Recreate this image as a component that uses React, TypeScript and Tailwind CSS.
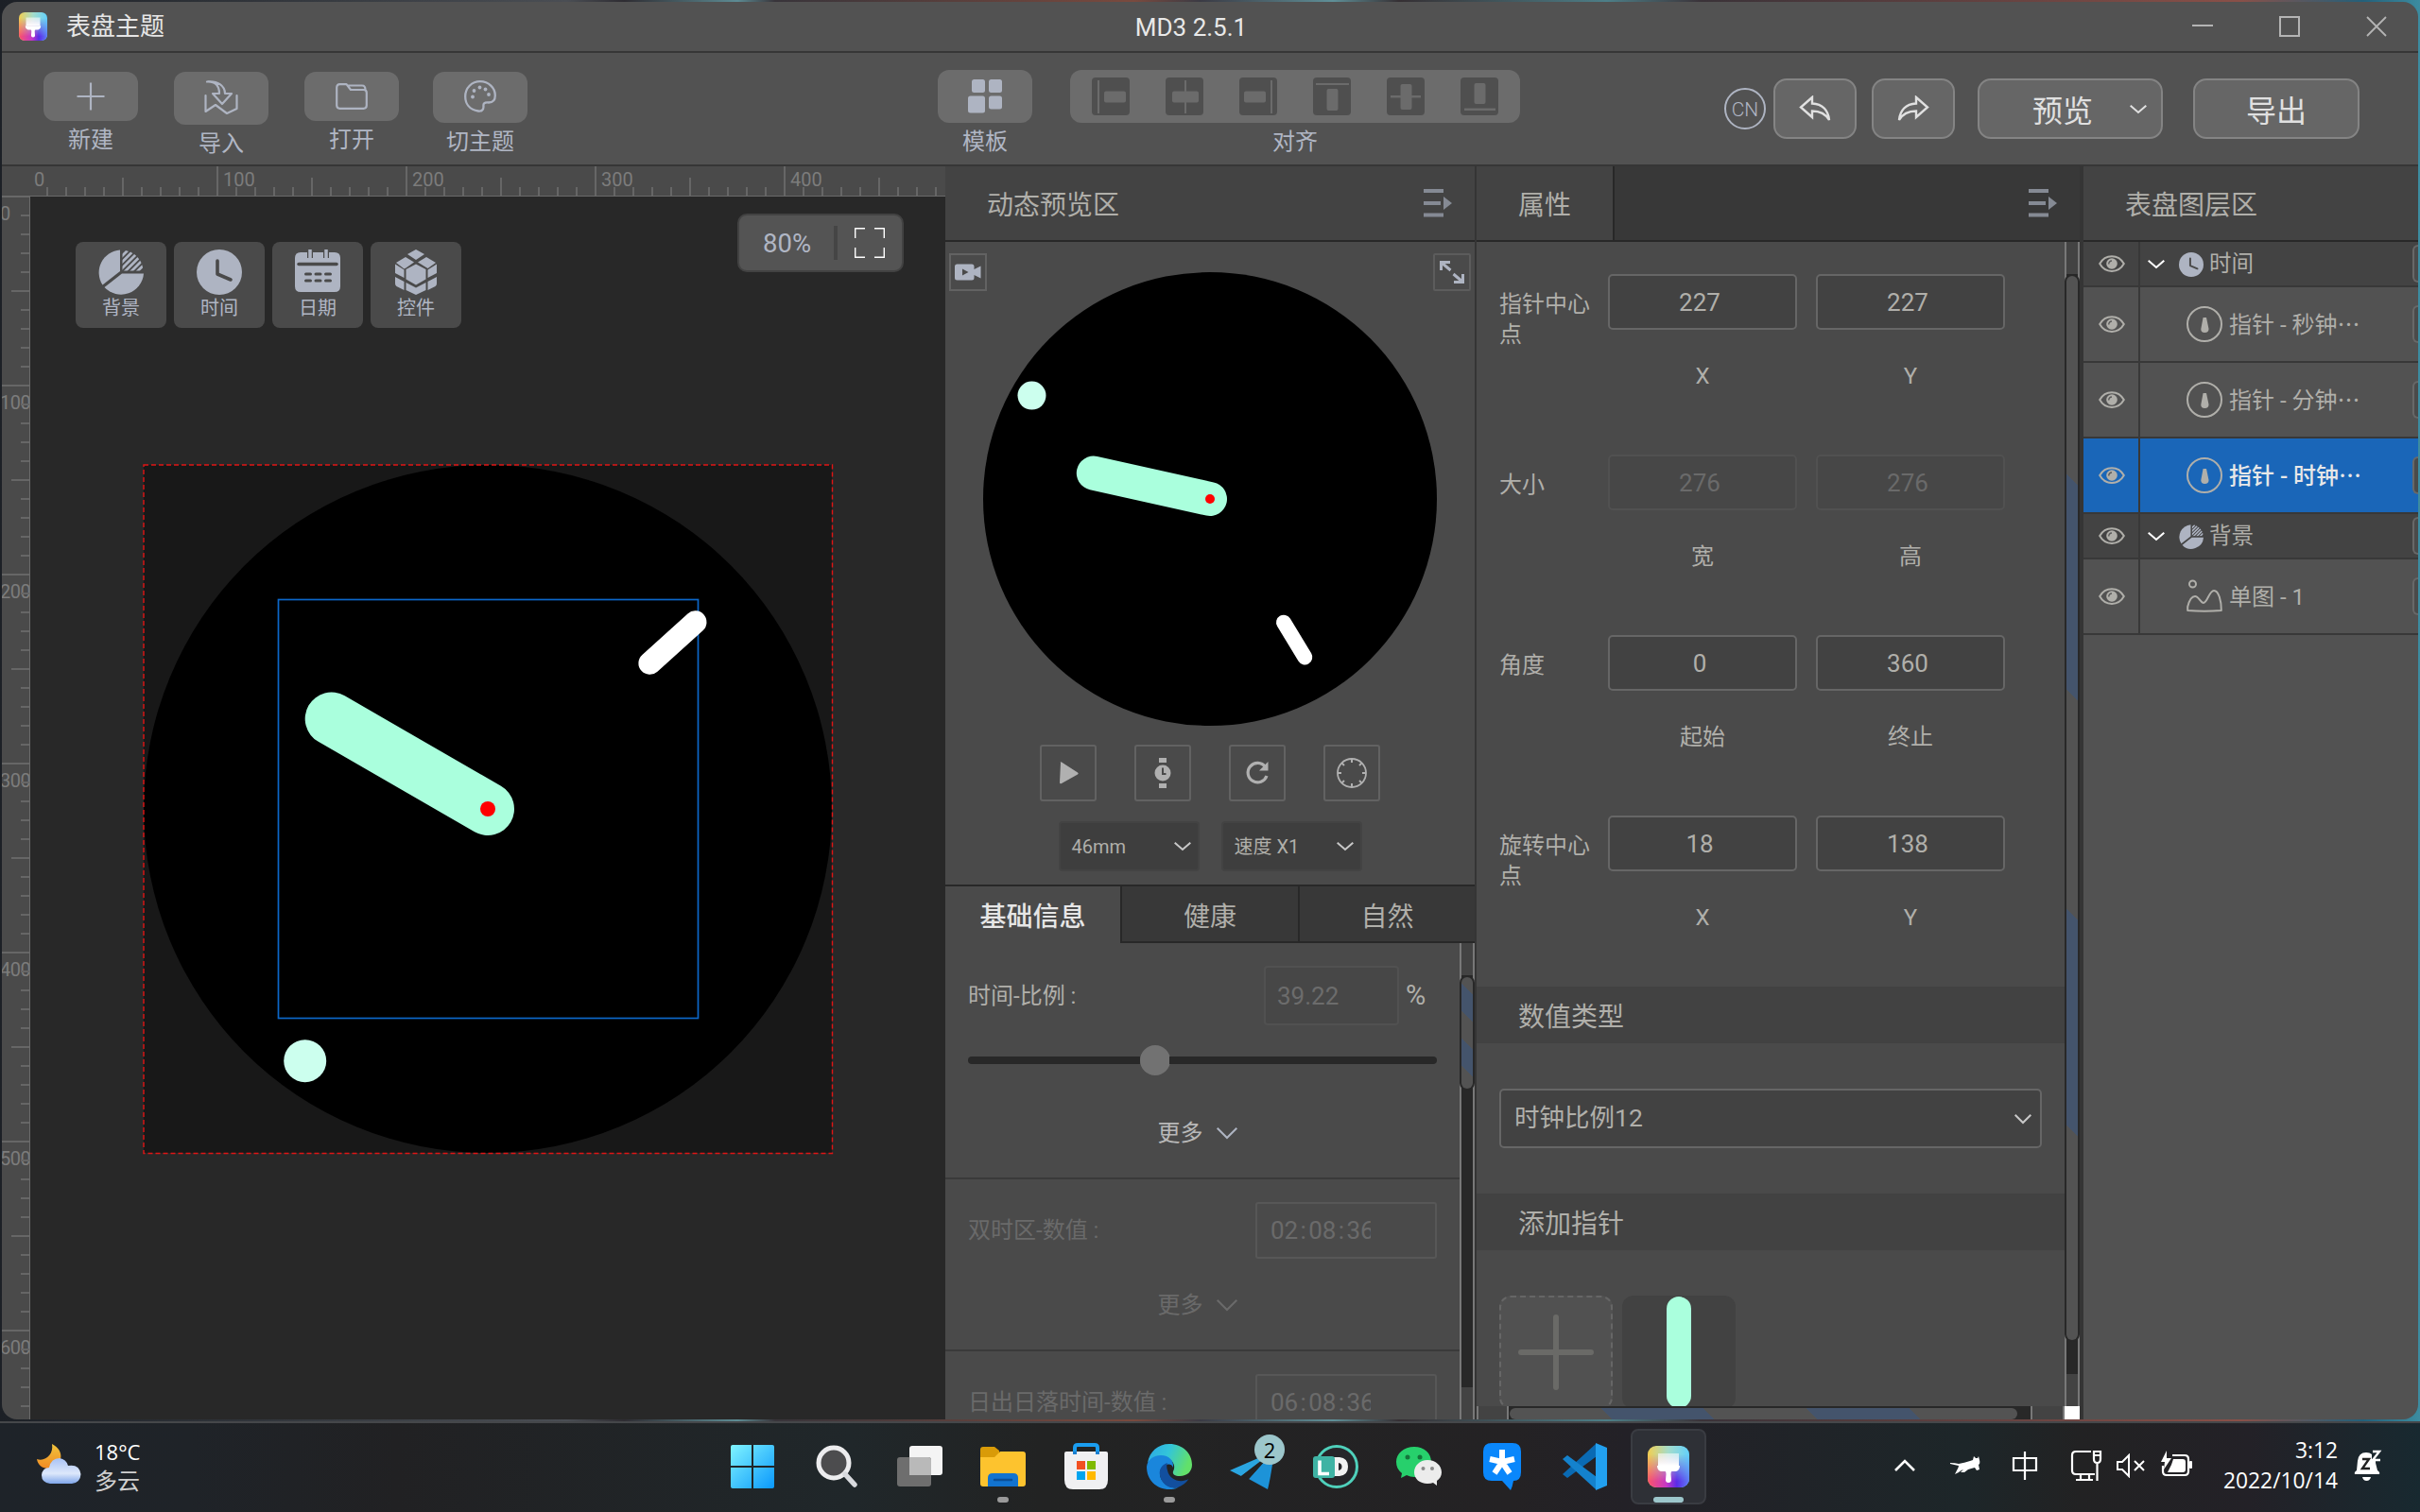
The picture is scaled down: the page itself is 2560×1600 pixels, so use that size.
import React from "react";

type Kids = { children?: React.ReactNode };

const ink = "#aeb4c2";

function Svg({ w, h, vb, className, children }: { w: number; h: number; vb?: string; className?: string } & Kids) {
  return (
    <svg width={w} height={h} viewBox={vb ?? `0 0 ${w} ${h}`} fill="none" className={"shrink-0 " + (className ?? "")}>
      {children}
    </svg>
  );
}

function Chevron({ w = 18, h = 9, color = "#c8c8c8", sw = 2 }: { w?: number; h?: number; color?: string; sw?: number }) {
  return (
    <Svg w={w} h={h} className="overflow-visible">
      <path d={`M0.7 0.7 L${w / 2} ${h - 1} L${w - 0.7} 0.7`} stroke={color} strokeWidth={sw} />
    </Svg>
  );
}

function AppIcon({ size, id }: { size: number; id: string }) {
  return (
    <Svg w={size} h={size} vb="0 0 44 44">
      <defs>
        <linearGradient id={id + "a"} x1="0" y1="0" x2="1" y2="0">
          <stop offset="0" stopColor="#f2cf50" />
          <stop offset=".5" stopColor="#a4dccb" />
          <stop offset="1" stopColor="#62d0fb" />
        </linearGradient>
        <linearGradient id={id + "b"} x1="0" y1="0" x2="1" y2="0">
          <stop offset="0" stopColor="#fb5468" />
          <stop offset=".45" stopColor="#c637c6" />
          <stop offset=".7" stopColor="#5a2be8" />
          <stop offset="1" stopColor="#5f7cf5" />
        </linearGradient>
        <linearGradient id={id + "c"} x1="0" y1="0" x2="0" y2="1">
          <stop offset=".2" stopColor="#fff" stopOpacity="0" />
          <stop offset=".85" stopColor="#fff" />
        </linearGradient>
        <mask id={id + "m"}>
          <rect width="44" height="44" fill={`url(#${id}c)`} />
        </mask>
        <linearGradient id={id + "d"} x1="0" y1="0" x2="0" y2="1">
          <stop offset="0" stopColor="#fff" stopOpacity=".55" />
          <stop offset="1" stopColor="#fff" />
        </linearGradient>
      </defs>
      <rect width="44" height="44" rx="9" fill={`url(#${id}a)`} />
      <rect width="44" height="44" rx="9" fill={`url(#${id}b)`} mask={`url(#${id}m)`} />
      <path d="M11 8h22v13H11z" fill={`url(#${id}d)`} />
      <path d="M10 21h24q0 5-4 6h-4.500q-1 0-1 3l.5 6q0 3-3 3t-3-3l.5-6q0-3-1-3H14q-4-1-4-6z" fill="#fff" />
    </Svg>
  );
}

function PieIcon({ size }: { size: number }) {
  return (
    <Svg w={size} h={size} vb="0 0 48 48">
      <defs>
        <clipPath id={"pq" + size}>
          <path d="M25.500 0.500A23.500 23.500 0 0 1 47.500 22.500H25.500z" />
        </clipPath>
      </defs>
      <path d="M23 0.500V23L4.500 37.500A24 24 0 0 1 23 .5z" fill={ink} />
      <path d="M25 25.500H48A24 24 0 0 1 6.500 40z" fill={ink} />
      <g clipPath={`url(#pq${size})`} stroke={ink} strokeWidth="2.800">
        <path d="M20 12 40 -8M20 18.500 46 -7.500M20 25 52 -7M22 29.500 54 -2.500M28 30 54 4M34.500 30 56 8.500" />
      </g>
    </Svg>
  );
}

function ClockIcon({ size, hand = "#4a4a4a" }: { size: number; hand?: string }) {
  return (
    <Svg w={size} h={size} vb="0 0 48 48">
      <circle cx="24" cy="24" r="24" fill={ink} />
      <path d="M22 12V26L36 32" stroke={hand} strokeWidth="3.600" strokeLinecap="round" strokeLinejoin="round" />
    </Svg>
  );
}

function TopBar() {
  return (
    <div className="flex h-[52px] shrink-0 items-center bg-[#525252]">
      <div className="flex w-[1160px] items-center pl-[18px]">
        <AppIcon size={30} id="t" />
        <span className="ml-5 text-[26px] leading-none text-[#e6e6e6]">表盘主题</span>
      </div>
      <div className="flex w-[194px] justify-center pt-[2px] pl-[2px] text-[26px] leading-none text-[#e8e8e8]">
        MD3 2.5.1
      </div>
      <div className="flex flex-1 items-center justify-end gap-[70px] pr-[33px]">
        <Svg w={22} h={22}>
          <path d="M0 10H22" stroke="#b4b4b4" strokeWidth="2" />
        </Svg>
        <Svg w={22} h={22}>
          <rect x="1" y="1" width="20" height="20" stroke="#b4b4b4" strokeWidth="2" />
        </Svg>
        <Svg w={22} h={22}>
          <path d="M1 1 21 21M21 1 1 21" stroke="#b4b4b4" strokeWidth="1.800" />
        </Svg>
      </div>
    </div>
  );
}

function ToolButton({ box, label, gap, children }: { box: string; label: string; gap: string } & Kids) {
  return (
    <div className={"flex w-[100px] shrink-0 flex-col items-center " + gap}>
      <div className={"flex w-[100px] items-center justify-center rounded-xl bg-[#6c6c6c] " + box}>{children}</div>
      <span className="mt-[8px] text-2xl leading-6 whitespace-nowrap text-[#b0b6c4]">{label}</span>
    </div>
  );
}

function AlignIcon({ children }: Kids) {
  return (
    <Svg w={40} h={40}>
      <rect width="40" height="40" rx="4" fill="#4f4f4f" />
      <g fill="#6b6b6b">{children}</g>
    </Svg>
  );
}

function BigButton({ className, children }: { className: string } & Kids) {
  return (
    <div
      className={
        "flex h-16 shrink-0 items-center rounded-[14px] border-2 border-[#848484] bg-[#666666] text-[32px] leading-none text-[#e0e0e0] " +
        className
      }
    >
      {children}
    </div>
  );
}

function Toolbar() {
  return (
    <div className="flex h-[122px] shrink-0 items-start border-y-2 border-[#363636] bg-[#525252]">
      <div className="flex w-[990px] shrink-0 items-start gap-[38px] pt-5 pl-11">
        <ToolButton box="h-[52px]" label="新建" gap="">
          <Svg w={30} h={30}>
            <path d="M15 0.500V29.500M.5 15H29.500" stroke={ink} strokeWidth="2.200" />
          </Svg>
        </ToolButton>
        <ToolButton box="h-14" label="导入" gap="">
          <Svg w={36} h={36} className="mt-[-2px]">
            <path
              d="M3 1.500C12 1 16 6 16 14H9L19 25 29 14H22C22 6 14 0 3 1.500zM1.500 16V33L12 26 24 35 34.500 30V16"
              stroke={ink}
              strokeWidth="2.200"
              strokeLinejoin="round"
              strokeLinecap="round"
            />
          </Svg>
        </ToolButton>
        <ToolButton box="h-[52px]" label="打开" gap="">
          <Svg w={34} h={28}>
            <path
              d="M4.500 1.200H11.500L16 7H29.500Q32.800 7 32.800 10V23.500Q32.800 26.800 29.500 26.800H4.500Q1.200 26.800 1.200 23.500V4.500Q1.200 1.200 4.500 1.200zM12 2.500H28Q31.500 2.500 31.500 7"
              stroke={ink}
              strokeWidth="2.200"
              strokeLinejoin="round"
            />
          </Svg>
        </ToolButton>
        <ToolButton box="h-[54px]" label="切主题" gap="ml-[-2px]">
          <Svg w={34} h={34} className="mt-[-2px]">
            <path
              d="M15 32.500C5 31 1.200 24 1.200 17C1.200 8 8 1.200 17 1.200S32.800 8 32.800 16C32.800 21 30 23.500 26 23.500C21 23 20 25 20.500 28C20.500 31.500 18 33 15 32.500z"
              stroke={ink}
              strokeWidth="2.300"
            />
            <g fill={ink}>
              <circle cx="9" cy="17.500" r="1.900" />
              <circle cx="10.500" cy="11" r="1.900" />
              <circle cx="16.500" cy="7.500" r="1.900" />
              <circle cx="22.500" cy="9.500" r="1.900" />
              <circle cx="26" cy="15" r="1.900" />
            </g>
          </Svg>
        </ToolButton>
      </div>
      <div className="flex w-[840px] shrink-0 items-start gap-10 pt-[18px]">
        <ToolButton box="h-14" label="模板" gap="">
          <Svg w={36} h={36}>
            <g fill={ink}>
              <rect x="4" y="0" width="14" height="14" rx="2.500" />
              <rect x="22" y="0" width="14" height="14" rx="2.500" />
              <rect x="0" y="17.500" width="18" height="18" rx="2.500" />
              <rect x="22" y="17.500" width="14" height="14" rx="2.500" />
            </g>
          </Svg>
        </ToolButton>
        <div className="flex w-[476px] flex-col items-center">
          <div className="flex h-14 w-[476px] items-center justify-center gap-[38px] rounded-xl bg-[#6c6c6c]">
            <AlignIcon>
              <rect x="6" y="3" width="2" height="35" />
              <rect x="13" y="14.500" width="23" height="12" rx="2" />
            </AlignIcon>
            <AlignIcon>
              <rect x="20" y="3" width="2" height="35" />
              <rect x="7" y="14.500" width="28" height="12" rx="2" />
            </AlignIcon>
            <AlignIcon>
              <rect x="33" y="3" width="2" height="35" />
              <rect x="5" y="14.500" width="23" height="12" rx="2" />
            </AlignIcon>
            <AlignIcon>
              <rect x="3" y="6" width="35" height="2" />
              <rect x="14.500" y="12" width="12" height="23" rx="2" />
            </AlignIcon>
            <AlignIcon>
              <rect x="4" y="19" width="32" height="2.500" />
              <rect x="14.500" y="7" width="12" height="27" rx="2" />
            </AlignIcon>
            <AlignIcon>
              <rect x="4" y="32.500" width="33" height="2.500" />
              <rect x="14.500" y="6" width="12" height="22" rx="2" />
            </AlignIcon>
          </div>
          <span className="mt-[8px] text-2xl leading-6 text-[#b0b6c4]">对齐</span>
        </div>
      </div>
      <div className="mt-[27px] flex flex-1 items-center">
        <div className="mr-2 ml-[-8px] flex size-11 shrink-0 items-center justify-center rounded-full border-2 border-[#aeb4c2] pt-[2px] text-[21px] leading-none font-light text-[#b0b6c4]">
          CN
        </div>
        <BigButton className="w-[88px] justify-center">
          <Svg w={34} h={28}>
            <path
              d="M14 2 2 12.500 14 23V16.500C22 16.500 28 19 32 26C31 16 25 9 14 8.500z"
              stroke="#e0e0e0"
              strokeWidth="2.400"
              strokeLinejoin="miter"
            />
          </Svg>
        </BigButton>
        <BigButton className="ml-4 w-[88px] justify-center">
          <Svg w={34} h={28}>
            <path
              d="M20 2 32 12.500 20 23V16.500C12 16.500 6 19 2 26C3 16 9 9 20 8.500z"
              stroke="#e0e0e0"
              strokeWidth="2.400"
              strokeLinejoin="miter"
            />
          </Svg>
        </BigButton>
        <BigButton className="ml-6 w-[196px] justify-between pr-[15px] pl-14">
          <span className="mt-[5px]">预览</span>
          <Chevron color="#e0e0e0" />
        </BigButton>
        <BigButton className="ml-8 w-[176px] justify-center">
          <span className="mt-[5px]">导出</span>
        </BigButton>
      </div>
    </div>
  );
}

function TopRuler() {
  return (
    <div className="flex h-8 shrink-0 overflow-hidden border-b border-[#6a6a6a] bg-[#4a4a4a] pl-[27px]">
      {Array.from({ length: 49 }, (_, i) => (
        <div key={i} className="relative flex w-5 shrink-0 items-end">
          {i > 0 && (
            <div
              className={"w-[2px] bg-[#666666] " + (i % 10 === 0 ? "h-[31px]" : i % 5 === 0 ? "h-[19px]" : "h-[9px]")}
            />
          )}
          {i % 10 === 0 && (
            <span className="absolute top-[4px] left-[7px] text-[20px] leading-5 text-[#7c7c7c]">{i * 10}</span>
          )}
        </div>
      ))}
    </div>
  );
}

function LeftRuler() {
  return (
    <div className="flex w-[30px] shrink-0 flex-col overflow-hidden border-r border-[#6a6a6a] bg-[#4a4a4a]">
      {Array.from({ length: 65 }, (_, i) => (
        <div key={i} className="relative flex h-5 shrink-0 flex-col items-end">
          <div
            className={
              "mt-[-1px] h-[2px] shrink-0 bg-[#666666] " +
              (i % 10 === 0 ? "w-[29px]" : i % 5 === 0 ? "w-[19px]" : "w-[9px]")
            }
          />
          {i % 10 === 0 && (
            <span className="absolute top-[8px] left-[-2px] text-[20px] leading-5 tracking-[-0.5px] text-[#7c7c7c]">
              {i * 10}
            </span>
          )}
        </div>
      ))}
    </div>
  );
}

function Widget({ label, children }: { label: string } & Kids) {
  return (
    <div className="flex h-[91px] w-24 flex-col items-center rounded-lg bg-[#4a4a4a] pt-2">
      {children}
      <span className="mt-1 text-[20px] leading-5 text-[#b0b6c4]">{label}</span>
    </div>
  );
}

function Canvas() {
  return (
    <div className="relative flex-1 overflow-hidden bg-[#282828]">
      <svg className="absolute top-[282px] left-[118px]" width="732" height="732" viewBox="150 490 732 732" fill="none">
        <rect x="152" y="492" width="728" height="728" fill="#181818" />
        <circle cx="516" cy="856" r="364" fill="#000" />
        <rect x="152" y="492" width="728.500" height="728.500" stroke="#e01414" strokeWidth="1.400" strokeDasharray="5 3" />
        <rect x="294.500" y="634.500" width="444" height="443" stroke="#0c67c8" strokeWidth="1.700" />
        <path d="M687.400 701.800 735.500 658.300" stroke="#fff" strokeWidth="24" strokeLinecap="round" />
        <path d="M350.700 760.600 516 856" stroke="#aaffdd" strokeWidth="56" strokeLinecap="round" />
        <circle cx="516" cy="856" r="8" fill="#f00" />
        <circle cx="322.700" cy="1122.700" r="22.500" fill="#ccffee" />
      </svg>
      <div className="absolute top-12 left-12 flex gap-2">
        <Widget label="背景">
          <PieIcon size={48} />
        </Widget>
        <Widget label="时间">
          <ClockIcon size={48} />
        </Widget>
        <Widget label="日期">
          <Svg w={48} h={48}>
            <path d="M6 3H42Q48 3 48 9V39Q48 45 42 45H6Q0 45 0 39V9Q0 3 6 3z" fill={ink} />
            <path d="M4 15.500H44" stroke="#4a4a4a" strokeWidth="3.500" strokeLinecap="round" />
            <path d="M16 0V9M33 0V9" stroke="#4a4a4a" strokeWidth="6" />
            <path d="M16 0V9.500M33 0V9.500" stroke={ink} strokeWidth="3.500" />
            <path
              d="M11.500 26h5M22 26h5M32.500 26h5M11.500 33h5M22 33h5M32.500 33h5"
              stroke="#4a4a4a"
              strokeWidth="3"
              strokeLinecap="round"
            />
          </Svg>
        </Widget>
        <Widget label="控件">
          <Svg w={44} h={48}>
            <g fill={ink}>
              <path d="M22 0 31 5 22 11 13 5z" />
              <path d="M11 8 20 13.500 11.500 19.500 9.500 20.500 1 14z" />
              <path d="M0 15.500 9.500 21.500V30L0 25z" />
              <path d="M33 8 43 14 34.500 20 24 13.500z" />
              <path d="M44 15.500V25L34.500 30V21.500z" />
              <path d="M22 15.500 32.500 21 32.500 31.500 22 37.500 11.500 31.500V21z" />
              <path d="M0 29 9.500 34V43L1.500 39Q0 38 0 36z" />
              <path d="M44 29 34.500 34V43L42.500 39Q44 38 44 36z" />
              <path d="M11.500 35 22 40.500 32.500 35V43L22 48 11.500 43z" />
            </g>
          </Svg>
        </Widget>
      </div>
      <div className="absolute top-[18px] right-11 flex h-[62px] w-[176px] items-center rounded-[10px] border-2 border-[#424242] bg-[#545454] pl-[25px]">
        <span className="w-[75px] pt-[2px] text-[27.500px] leading-none text-[#b0b6c4]">80%</span>
        <div className="h-9 w-1 bg-[#454545]" />
        <Svg w={32} h={32} className="ml-[18px]">
          <path d="M0.700 11V0.700H11M21 .7H31.300V11M31.300 21V31.300H21M11 31.300H.7V21" stroke="#fff" strokeWidth="1.400" />
        </Svg>
      </div>
    </div>
  );
}

function Editor() {
  return (
    <div className="flex w-[998px] shrink-0 flex-col">
      <TopRuler />
      <div className="flex min-h-0 flex-1">
        <LeftRuler />
        <Canvas />
      </div>
    </div>
  );
}

function ListIcon() {
  return (
    <Svg w={30} h={30}>
      <g fill="#858a94">
        <rect x="0" y="0" width="21" height="4" />
        <rect x="0" y="13" width="18" height="4" />
        <rect x="0" y="25.500" width="21" height="4" />
        <path d="M21 8 30 15 21 22z" />
      </g>
    </Svg>
  );
}

function SquareButton({ children }: Kids) {
  return (
    <div className="flex size-[60px] items-center justify-center rounded-[3px] border-2 border-[#626262]">{children}</div>
  );
}

function SmallSelect({ label }: { label: string }) {
  return (
    <div className="flex h-[53px] w-[149px] items-center justify-between rounded-[4px] border-2 border-[#434343] bg-[#3e3e3e] pr-[7px] pl-3 text-[20px] leading-none text-[#b0afaa]">
      <span>{label}</span>
      <Chevron />
    </div>
  );
}

function TimeBox({ value }: { value: string[] }) {
  return (
    <div className="flex h-[60px] w-48 shrink-0 items-center rounded-[3px] border-2 border-[#575757] pl-[14px]">
      <div className="flex w-[106px] overflow-hidden text-[26px] leading-8">
        <span>{value[0]}</span>
        <span className="w-[11px] shrink-0 text-center">:</span>
        <span>{value[1]}</span>
        <span className="w-[11px] shrink-0 text-center">:</span>
        <span>{value[2]}</span>
      </div>
    </div>
  );
}

function More({ color, stroke }: { color: string; stroke: string }) {
  return (
    <div className={"flex h-8 items-center justify-center gap-[14px] pr-[11px] text-2xl leading-none " + color}>
      <span>更多</span>
      <Chevron w={22} h={12} color={stroke} />
    </div>
  );
}

function PreviewPanel() {
  return (
    <div className="flex w-[562px] shrink-0 flex-col border-r-2 border-[#353535] bg-[#4a4a4a]">
      <div className="flex h-20 shrink-0 items-center justify-between border-b-2 border-[#282828] bg-[#434343] pr-[24px] pl-11">
        <span className="mt-[5px] text-[28px] leading-none text-[#b0afaa]">动态预览区</span>
        <ListIcon />
      </div>
      <div className="flex h-[682px] shrink-0 flex-col items-center border-b-2 border-[#282828]">
        <div className="flex w-full items-start justify-between px-1 pt-3">
          <div className="flex size-10 items-center justify-center border-2 border-[#626262]">
            <Svg w={28} h={18}>
              <path
                fillRule="evenodd"
                d="M2.500 0.500H18Q20.500 .5 20.500 3V6L27.500 2.500V15.500L20.500 12V15Q20.500 17.500 18 17.500H2.500Q0 17.500 0 15V3Q0 .5 2.500 .5zM8 5.500V12.500L14.500 9z"
                fill={ink}
              />
            </Svg>
          </div>
          <svg width="480" height="480" viewBox="1040 288 480 480" className="-mx-20 mt-5" fill="none">
            <circle cx="1280" cy="528" r="240" fill="#000" />
            <circle cx="1091.500" cy="418.600" r="15" fill="#ccffee" />
            <path d="M1156.800 500.600 1280 528" stroke="#aaffdd" strokeWidth="36" strokeLinecap="round" />
            <circle cx="1280" cy="528" r="5" fill="#f00" />
            <path d="M1358 658.700 1380.300 695.400" stroke="#fff" strokeWidth="16" strokeLinecap="round" />
          </svg>
          <div className="flex size-10 items-center justify-center rounded-[2px] border-2 border-[#5c5c5c]">
            <Svg w={26} h={24}>
              <path d="M1.500 10V1.500H11M2 2 11.500 10M24.500 14V22.500H15M24 22 14.500 14" stroke={ink} strokeWidth="3" />
            </Svg>
          </div>
        </div>
        <div className="mt-5 flex gap-10">
          <SquareButton>
            <Svg w={22} h={26} className="ml-[2px]">
              <path d="M2 1Q1 0 3 0.500L20 11.500Q21.500 12.500 20 13.500L3 23Q1 24 1 22z" transform="translate(0 1)" fill="#b0b0b0" />
            </Svg>
          </SquareButton>
          <SquareButton>
            <Svg w={18} h={34}>
              <g fill="#b0b0b0">
                <path d="M5 1h8v5H5zM5 28h8v5H5z" />
                <circle cx="9" cy="17" r="8.500" />
              </g>
              <path d="M9 11.500V18H12.500" stroke="#4a4a4a" strokeWidth="2" />
            </Svg>
          </SquareButton>
          <SquareButton>
            <Svg w={26} h={26}>
              <path d="M21.500 6.500A10.200 10.200 0 1 0 23 16" stroke="#b0b0b0" strokeWidth="3.200" />
              <path d="M24.500 1V10.500H15z" fill="#b0b0b0" />
            </Svg>
          </SquareButton>
          <SquareButton>
            <Svg w={32} h={32}>
              <circle cx="16" cy="16" r="15" stroke="#b0b0b0" strokeWidth="1.800" />
              <path
                d="M16 1V5M16 27V31M1 16H5M27 16H31M5.400 5.400 8 8M26.600 5.400 24 8M5.400 26.600 8 24M26.600 26.600 24 24"
                stroke="#b0b0b0"
                strokeWidth="2"
              />
            </Svg>
          </SquareButton>
        </div>
        <div className="mt-[21px] flex gap-[23px]">
          <SmallSelect label="46mm" />
          <SmallSelect label="速度 X1" />
        </div>
      </div>
      <div className="flex h-[60px] shrink-0 text-[28px] leading-none text-[#b0afaa]">
        <div className="flex w-[185px] items-center justify-center pt-[6px] font-medium text-[#e6e6e6]">基础信息</div>
        <div className="flex w-[188px] items-center justify-center border-b-2 border-l-2 border-[#282828] bg-[#383838] pt-[7px]">
          健康
        </div>
        <div className="flex flex-1 items-center justify-center border-b-2 border-l-2 border-[#282828] bg-[#383838] pt-[7px]">
          自然
        </div>
      </div>
      <div className="flex min-h-0 flex-1">
        <div className="flex w-[544px] shrink-0 flex-col overflow-hidden">
          <div className="flex h-[250px] shrink-0 flex-col border-b-2 border-[#3a3a3a] px-6 pt-6">
            <div className="flex items-center text-2xl leading-none text-[#b0afaa]">
              <span className="flex-1 whitespace-pre">时间-比例 :</span>
              <div className="flex h-[63px] w-[143px] items-center rounded-[4px] border-2 border-[#515151] bg-[#474747] pl-3 text-[26px] text-[#6c6c6c]">
                39.22
              </div>
              <span className="ml-[7px] w-[33px] text-[29px]">%</span>
            </div>
            <div className="mt-[21px] flex h-8 items-center">
              <div className="h-2 w-[182px] rounded-l bg-[#282828]" />
              <div className="-mr-px size-8 rounded-full bg-[#727272]" />
              <div className="h-2 flex-1 rounded-r bg-[#282828]" />
            </div>
            <div className="mt-[45px]">
              <More color="text-[#b8b8b8]" stroke="#aeb4c2" />
            </div>
          </div>
          <div className="flex h-[182px] shrink-0 flex-col border-b-2 border-[#3a3a3a] px-6 pt-6 text-[#6a6a6a]">
            <div className="flex items-center text-2xl leading-none">
              <span className="flex-1 whitespace-pre">双时区-数值 :</span>
              <TimeBox value={["02", "08", "36"]} />
            </div>
            <div className="mt-[33px]">
              <More color="text-[#6a6a6a]" stroke="#6a6a6a" />
            </div>
          </div>
          <div className="flex shrink-0 items-center px-6 pt-6 text-2xl leading-none text-[#6a6a6a]">
            <span className="flex-1 whitespace-pre">日出日落时间-数值 :</span>
            <TimeBox value={["06", "08", "36"]} />
          </div>
        </div>
        <div className="flex flex-1 flex-col border-x-2 border-[#787878] bg-[#282828]">
          <div className="h-[34px] shrink-0 bg-[#434343]" />
          <div className="-mx-0.5 flex h-[122px] shrink-0 rounded-[8px] border-2 border-[#282828]">
            <div className="flex-1 rounded-[6px] bg-[#535353] bg-[linear-gradient(45deg,transparent_17px,#44546c_17px,#44546c_38px,transparent_38px,transparent_58px,#44546c_58px,#44546c_79px,transparent_79px)]" />
          </div>
          <div className="flex-1" />
          <div className="h-[34px] shrink-0 bg-[#434343]" />
        </div>
      </div>
    </div>
  );
}

function Field({ value, label, dim }: { value: string; label: string; dim?: boolean }) {
  return (
    <div className="flex w-[200px] flex-col items-center">
      <div
        className={
          "flex h-[59px] w-[200px] items-center justify-center rounded-[5px] border-2 pt-px pr-[6px] text-[26px] leading-none " +
          (dim ? "border-[#515151] bg-[#474747] text-[#6a6a6a]" : "border-[#666666] bg-[#424242] text-[#b0afaa]")
        }
      >
        {value}
      </div>
      <span className="mt-[37px] text-2xl leading-6 text-[#b0afaa]">{label}</span>
    </div>
  );
}

function PropRow({ title, a, b, dim }: { title: string; a: [string, string]; b: [string, string]; dim?: boolean }) {
  return (
    <div className="flex h-[191px] shrink-0 pl-6">
      <div className="w-[115px] pt-[16px] pr-[15px] text-2xl leading-8 text-[#b0afaa]">{title}</div>
      <Field value={a[0]} label={a[1]} dim={dim} />
      <div className="w-5" />
      <Field value={b[0]} label={b[1]} dim={dim} />
    </div>
  );
}

function Section({ children }: Kids) {
  return (
    <div className="flex h-[60px] shrink-0 items-center bg-[#424242] pt-[5px] pl-11 text-[28px] leading-none text-[#b0afaa]">
      {children}
    </div>
  );
}

function PropertyPanel() {
  return (
    <div className="flex w-[642px] shrink-0 flex-col border-r-4 border-[#353535] bg-[#4a4a4a]">
      <div className="flex h-20 shrink-0 border-b-2 border-[#282828] bg-[#383838]">
        <div className="flex w-[146px] items-center border-r-2 border-[#282828] bg-[#434343] pt-[5px] pl-11 text-[28px] leading-none text-[#b0afaa]">
          属性
        </div>
        <div className="flex flex-1 items-center justify-end pr-[24px]">
          <ListIcon />
        </div>
      </div>
      <div className="flex min-h-0 flex-1">
        <div className="flex w-[622px] shrink-0 flex-col">
          <div className="flex h-[1232px] shrink-0 flex-col overflow-hidden pt-[34px]">
            <PropRow title="指针中心点" a={["227", "X"]} b={["227", "Y"]} />
            <PropRow title="大小" a={["276", "宽"]} b={["276", "高"]} dim />
            <PropRow title="角度" a={["0", "起始"]} b={["360", "终止"]} />
            <PropRow title="旋转中心点" a={["18", "X"]} b={["138", "Y"]} />
            <div className="-mt-[10px]">
              <Section>数值类型</Section>
            </div>
            <div className="mt-12 mb-12 ml-6 flex h-[63px] w-[574px] shrink-0 items-center justify-between rounded-[5px] border-2 border-[#666666] bg-[#424242] pr-[9px] pl-[14px] text-[26.500px] leading-none text-[#b0afaa]">
              <span>时钟比例12</span>
              <Chevron h={10} />
            </div>
            <Section>添加指针</Section>
            <div className="mt-12 ml-6 flex shrink-0 gap-[10px]">
              <div className="flex size-[120px] items-center justify-center rounded-xl border-2 border-dashed border-[#666666] bg-[#515151]">
                <Svg w={80} h={80}>
                  <path d="M40 3V77M3 40H77" stroke="#6a6a67" strokeWidth="6" strokeLinecap="round" />
                </Svg>
              </div>
              <div className="flex size-[120px] items-center justify-center rounded-xl bg-[#424242]">
                <div className="h-[118px] w-[26px] rounded-full bg-[#aaffdd]" />
              </div>
            </div>
          </div>
          <div className="flex h-[14px] shrink-0 border-t-2 border-[#282828] bg-[#282828]">
            <div className="-mt-0.5 w-[34px] border-x-2 border-[#787878] bg-[#434343]" />
            <div className="ml-px w-[537px] rounded-[6px] bg-[#535353] bg-[linear-gradient(45deg,transparent_77px,#44546c_77px,#44546c_153px,transparent_153px,transparent_230px,#44546c_230px,#44546c_307px,transparent_307px)]" />
            <div className="w-[14px]" />
            <div className="-mt-0.5 flex-1 border-x-2 border-[#787878] bg-[#434343]" />
          </div>
        </div>
        <div className="flex w-4 shrink-0 flex-col">
          <div className="flex h-[1232px] flex-col border-x-2 border-[#787878] bg-[#282828]">
            <div className="h-[34px] shrink-0 bg-[#434343]" />
            <div className="-mx-0.5 flex h-[1130px] shrink-0 rounded-[8px] border-2 border-[#282828]">
              <div className="flex-1 rounded-[6px] bg-[#535353] bg-[linear-gradient(45deg,transparent_161px,#44546c_161px,#44546c_323px,transparent_323px,transparent_487px,#44546c_487px,#44546c_648px,transparent_648px)]" />
            </div>
            <div className="flex-1" />
            <div className="h-[34px] shrink-0 bg-[#434343]" />
          </div>
          <div className="flex-1 bg-white" />
        </div>
      </div>
    </div>
  );
}

function Eye() {
  return (
    <div className="flex w-[60px] shrink-0 items-center justify-center self-stretch border-r-2 border-[#383838] pl-[2px]">
      <Svg w={28} h={18}>
        <path d="M1.200 9C7-1.500 21-1.500 26.800 9C21 19.500 7 19.500 1.200 9z" stroke="#b0afaa" strokeWidth="2" />
        <circle cx="14" cy="9" r="5.800" fill="#b0afaa" />
        <path d="M10.800 9.500A3.200 3.200 0 0 1 14 6" stroke="#5a5a5a" strokeWidth="1.500" />
      </Svg>
    </div>
  );
}

function Toggle() {
  return (
    <div className="ml-auto h-10 w-[6px] rounded-l-md border-y-2 border-l-2 border-[#686868] bg-[#4a4a4a]" />
  );
}

function GroupRow({ label, children }: { label: string } & Kids) {
  return (
    <div className="flex h-12 shrink-0 items-center border-b-2 border-[#383838] bg-[#434343]">
      <Eye />
      <div className="ml-2 flex items-center">
        <Chevron h={9} w={18} color="#ffffff" />
        <div className="mt-[2px] ml-[15px]">{children}</div>
        <span className="ml-[6px] pt-px text-[23.500px] leading-none text-[#b0afaa]">{label}</span>
      </div>
      <Toggle />
    </div>
  );
}

function HandIcon() {
  return (
    <Svg w={38} h={38}>
      <circle cx="19" cy="19" r="18" stroke="#b0afaa" strokeWidth="2" />
      <path d="M17.600 12H21L23.500 24Q23.500 28 19.300 28T15.300 24z" fill="#b0afaa" />
    </Svg>
  );
}

function LayerRow({ label, active, children }: { label: string; active?: boolean } & Kids) {
  return (
    <div
      className={
        "flex h-20 shrink-0 items-center border-b-2 border-[#383838] " + (active ? "bg-[#1a66b8]" : "bg-[#525252]")
      }
    >
      <Eye />
      <div className="ml-[49px] flex items-center">
        {children}
        <span
          className={
            "ml-[7px] pt-px text-2xl leading-none whitespace-pre " +
            (active ? "text-[#e8e8e8] font-medium" : "text-[#b0afaa]")
          }
        >
          {label}
        </span>
      </div>
      <Toggle />
    </div>
  );
}

function LayerPanel() {
  return (
    <div className="flex flex-1 flex-col overflow-hidden bg-[#525252]">
      <div className="flex h-20 shrink-0 items-center border-b-2 border-[#282828] bg-[#434343] pt-[5px] pl-11 text-[28px] leading-none text-[#b0afaa]">
        表盘图层区
      </div>
      <GroupRow label="时间">
        <ClockIcon size={26} />
      </GroupRow>
      <LayerRow label="指针 - 秒钟⋯">
        <HandIcon />
      </LayerRow>
      <LayerRow label="指针 - 分钟⋯">
        <HandIcon />
      </LayerRow>
      <LayerRow label="指针 - 时钟⋯" active>
        <HandIcon />
      </LayerRow>
      <GroupRow label="背景">
        <PieIcon size={26} />
      </GroupRow>
      <LayerRow label="单图 - 1">
        <Svg w={38} h={36}>
          <circle cx="6.500" cy="5" r="3.500" stroke="#b0afaa" strokeWidth="2" />
          <path
            d="M1.200 33V29C3 22 6 18 9 18C13 18 15 25 18 25C22 25 24 12 29 12C34 12 37 23 36.800 33Q19 34.500 1.200 33z"
            stroke="#b0afaa"
            strokeWidth="2"
            strokeLinejoin="round"
          />
        </Svg>
      </LayerRow>
    </div>
  );
}

function TaskItem({ mark, children }: { mark?: boolean } & Kids) {
  return (
    <div className="relative flex h-20 w-[88px] items-center justify-center">
      {children}
      {mark && <div className="absolute bottom-[2px] h-[6px] w-3 rounded-full bg-[#9a9a9a]" />}
    </div>
  );
}

function Taskbar() {
  return (
    <div className="flex h-24 shrink-0 border-t-2 border-[#45474a] bg-[linear-gradient(90deg,#1e2329_0px,#1f2328_200px,#212123_420px,#20272a_900px,#222323_1100px,#242224_1600px,#232127_1720px,#1d2629_2080px,#222223_2200px,#232127_2380px,#182930_2560px)] font-['Open_Sans','Noto_Sans_CJK_SC',sans-serif] text-white">
      <div className="flex w-[753px] items-start pt-[18px] pl-[38px]">
        <Svg w={50} h={50}>
          <defs>
            <linearGradient id="moon" x1="0" y1="0" x2="0" y2="1">
              <stop offset="0" stopColor="#f0c53c" />
              <stop offset="1" stopColor="#f08a24" />
            </linearGradient>
            <linearGradient id="cloud" x1="0" y1="0" x2="0" y2="1">
              <stop offset="0" stopColor="#a8c2f5" />
              <stop offset=".6" stopColor="#dde8fb" />
              <stop offset="1" stopColor="#7fa6ea" />
            </linearGradient>
          </defs>
          <path d="M17 4C31 11 29 27 14 30C6 30 2 26 1 20C10 23 19 15 17 4z" fill="url(#moon)" />
          <path d="M15 46Q6 45 6 37Q7 29 14 29Q16 19 25 19Q32 20 34 27Q46 25 47.500 36Q47 45 38 46z" fill="url(#cloud)" />
        </Svg>
        <div className="-mt-1 ml-3 flex flex-col text-2xl leading-8">
          <span className="text-[22px]">18°C</span>
          <span className="-mt-px text-[#d0d0d0]">多云</span>
        </div>
      </div>
      <div className="flex w-[1249px] items-start pt-[6px]">
        <TaskItem>
          <Svg w={46} h={46} className="-ml-[2px]">
            <defs>
              <linearGradient id="win" x1="0" y1="0" x2="1" y2="1">
                <stop offset="0" stopColor="#80f4ff" />
                <stop offset="1" stopColor="#0a98fc" />
              </linearGradient>
            </defs>
            <path
              d="M2 0H22V22H0V2Q0 0 2 0zM24 0H44Q46 0 46 2V22H24zM0 24H22V46H2Q0 46 0 44zM24 24H46V44Q46 46 44 46H24z"
              fill="url(#win)"
            />
          </Svg>
        </TaskItem>
        <TaskItem>
          <Svg w={44} h={46}>
            <circle cx="19" cy="19" r="16" fill="#4c4c4e" stroke="#ececee" strokeWidth="5" />
            <path d="M31 31 41 42" stroke="#d8dade" strokeWidth="5.500" strokeLinecap="round" />
          </Svg>
        </TaskItem>
        <TaskItem>
          <Svg w={48} h={46}>
            <rect x="13" y="1" width="35" height="31" rx="3" fill="#f4f4f4" />
            <rect x="0" y="13" width="36" height="31" rx="3" fill="#6e6e6e" />
            <path d="M13 13H33Q36 13 36 16V32H13z" fill="#b9b9b9" />
          </Svg>
        </TaskItem>
        <TaskItem mark>
          <Svg w={50} h={44}>
            <path d="M1 4Q1 1 4 1H16L21 5V14H1z" fill="#d99b08" />
            <path d="M1 12Q4 12 16 12L22 6H46Q49 6 49 9V40Q49 43 46 43H4Q1 43 1 40z" fill="#fdc32e" />
            <path d="M9 43V34Q9 29 14 29H36Q41 29 41 34V43z" fill="#1273cf" />
            <path d="M16 36H34" stroke="#0b4f97" strokeWidth="2.500" strokeLinecap="round" />
          </Svg>
        </TaskItem>
        <TaskItem>
          <Svg w={48} h={50}>
            <path d="M12 12V5Q12 2 15 2H33Q36 2 36 5V12" stroke="#1a9df0" strokeWidth="4" />
            <path d="M1 11Q1 9 3 9H45Q47 9 47 11V39Q47 49 38 49H10Q1 49 1 39z" fill="#f0f0f2" />
            <path d="M12 9V12M36 9V12" stroke="#1a7fd0" strokeWidth="4" />
            <rect x="14" y="19" width="9" height="9" fill="#f25022" />
            <rect x="25" y="19" width="9" height="9" fill="#7fba00" />
            <rect x="14" y="30" width="9" height="9" fill="#00a4ef" />
            <rect x="25" y="30" width="9" height="9" fill="#ffb900" />
          </Svg>
        </TaskItem>
        <TaskItem mark>
          <Svg w={48} h={48}>
            <defs>
              <linearGradient id="eg1" x1="0" y1="0" x2="1" y2=".3">
                <stop offset="0" stopColor="#2ba7e6" />
                <stop offset=".5" stopColor="#33c5d9" />
                <stop offset="1" stopColor="#62e06a" />
              </linearGradient>
            </defs>
            <path
              d="M1 20C3 8 12 0 24 0C38 0 48 10 48 22C48 29 43 34 35 34C30 34 27 32 28 29C33 20 22 11 12 14C7 15 3 17 1 20z"
              fill="url(#eg1)"
            />
            <path
              d="M0 24C1 16 8 12 15 12C24 12 29 18 28 25C26 18 14 22 14 31C14 42 26 48 33 46C30 48 27 48 24 48C10 48 0 38 0 24z"
              fill="#1a86dc"
            />
            <path
              d="M22 20C15 22 13 28 14 33C16 44 26 48 33 46C38 44 42 41 44.500 37C36 42 24 38 22 28C21 25 21 22 22 20z"
              fill="#124f9e"
            />
          </Svg>
        </TaskItem>
        <TaskItem>
          <Svg w={48} h={42} className="mt-2">
            <path d="M46 1 0 21 12 27z" fill="#2aa5e0" />
            <path d="M46 1 20 30 40 41Q43 30 47 1z" fill="#1d93d8" />
            <path d="M46 1 12 27 20 30z" fill="#222" />
          </Svg>
          <div className="absolute top-[6px] left-[46px] flex size-8 items-center justify-center rounded-full bg-[#9cc6cb] text-[22px] leading-none text-black">
            2
          </div>
        </TaskItem>
        <TaskItem>
          <Svg w={50} h={48}>
            <circle cx="26" cy="24" r="21.500" fill="#26262a" stroke="#4fd0bb" strokeWidth="3" />
            <path d="M23 14H29Q38 15 38 24T29 34H23z" fill="#f2f2f2" />
            <path d="M28 20Q31.500 20.500 31.500 24T28 28z" fill="#26262a" />
            <rect x="1" y="13" width="23" height="23" rx="3" fill="#3fb3a4" />
            <path d="M8 17.500V31.500H18" stroke="#fff" strokeWidth="3.600" />
          </Svg>
        </TaskItem>
        <TaskItem>
          <Svg w={50} h={42}>
            <path d="M20 0C9 0 1 7 1 16C1 21 3 25 7 28L6 33L12 30Q16 32 20 32C31 32 38 25 38 16S31 0 20 0z" fill="#27d06c" />
            <circle cx="13" cy="11" r="2.500" fill="#14753b" />
            <circle cx="26" cy="11" r="2.500" fill="#14753b" />
            <path
              d="M34 14C26 14 20 20 20 27S26 39 34 39Q38 39 40 38L44 41L44 36C47 34 49 31 49 27C49 20 43 14 34 14z"
              fill="#ececec"
            />
            <circle cx="29.500" cy="23" r="2" fill="#8a8a8a" />
            <circle cx="39" cy="23" r="2" fill="#8a8a8a" />
          </Svg>
        </TaskItem>
        <TaskItem>
          <Svg w={40} h={50}>
            <path d="M9 0H31Q40 0 40 9V31Q40 40 32 40Q31 46 29 50L20 40H9Q0 40 0 31V9Q0 0 9 0z" fill="#0a87fb" />
            <path d="M20 7V20M20 20 7 17M20 20 33 17M20 20 12 32M20 20 28 32" stroke="#fff" strokeWidth="6" />
          </Svg>
        </TaskItem>
        <TaskItem>
          <Svg w={48} h={50}>
            <path d="M35 1 0 33 5 37 36 14z" fill="#0a6ab3" />
            <path d="M0 17 5 13 36 36 35 49z" fill="#1482cd" />
            <path d="M35 0 47 5V45L35 50z" fill="#22a0ef" />
          </Svg>
        </TaskItem>
        <div className="relative ml-[4px] flex size-20 items-center justify-center rounded-lg border-2 border-[#3a3c42] bg-[#2e3036]">
          <AppIcon size={44} id="b" />
          <div className="absolute bottom-0 h-[6px] w-8 rounded-full bg-[#9cc6cb]" />
        </div>
      </div>
      <div className="flex h-[90px] flex-1 items-center">
        <Svg w={24} h={14} className="ml-[1px]">
          <path d="M2 12 12 2 22 12" stroke="#fff" strokeWidth="2.600" />
        </Svg>
        <Svg w={32} h={22} className="ml-[36px]">
          <path
            d="M0 8Q5 8 9 9Q15 8 21 6L24 5 25 1 27 3H29L30 1 31 5Q32 9 30 10L31 15 28 16 26 13Q22 14 19 15L15 18 11 18 14 15Q11 16 9 18L5 20 7 16Q9 13 9 11Q4 10 0 9z"
            fill="#fff"
          />
        </Svg>
        <Svg w={28} h={32} className="ml-[33px]">
          <path d="M2 8H26V21H2zM14 1V31" stroke="#fff" strokeWidth="2.200" />
        </Svg>
        <Svg w={34} h={34} className="ml-[34px]">
          <path d="M22 2H6Q2 2 2 6V22Q2 26 6 26H26M11 26V32M20 26V32M6 32H24" stroke="#fff" strokeWidth="2.200" />
          <path d="M25 2H32V10Q32 14 28.500 14T25 10zM28.500 14V33M25 6H32" stroke="#fff" strokeWidth="2.200" />
        </Svg>
        <Svg w={32} h={26} className="ml-[14px]">
          <path d="M2 9H7L14 2V24L7 17H2zM20 8 30 18M30 8 20 18" stroke="#fff" strokeWidth="2" />
        </Svg>
        <Svg w={34} h={28} className="mt-[-4px] ml-[16px]">
          <path d="M12 5H25Q29 5 29 9V22Q29 26 25 26H6Q2 26 2 22V16" stroke="#fff" strokeWidth="2.200" />
          <path d="M13 9H23Q26 9 26 12V20Q26 23 23 23H7L11 15z" fill="#fff" />
          <rect x="30" y="11" width="3" height="8" rx="1" fill="#fff" />
          <path d="M6 0 0 12H4L3 20 11 8H6z" fill="#fff" />
        </Svg>
        <div className="ml-auto flex flex-col items-end text-[22.800px] leading-8">
          <span>3:12</span>
          <span>2022/10/14</span>
        </div>
        <Svg w={30} h={34} className="mr-[40px] ml-[17px]">
          <path d="M4 12Q5 3 13 3Q17 3 19 5V10H23V14L25 22Q28 24 27 26H1Q0 24 3 22z" fill="#fff" />
          <path d="M9 29H18Q17 33 13.500 33T9 29z" fill="#fff" />
          <path d="M9 10H16L9 20H17" stroke="#222" strokeWidth="2.400" />
          <path d="M20 2H27L20 11H28" stroke="#fff" strokeWidth="2.400" />
        </Svg>
      </div>
    </div>
  );
}

export default function App() {
  return (
    <div className="flex h-[1600px] w-[2560px] flex-col overflow-hidden bg-[#26282c] font-['Roboto','Noto_Sans_CJK_SC',sans-serif]">
      <div className="flex h-[1504px] shrink-0 flex-col bg-[linear-gradient(90deg,#1c2026_0px,#4a4e54_600px,#2e2c32_660px,#5d8c94_780px,#38343a_820px,#7a4a3e_1200px,#3a3a44_1270px,#5f9098_1410px,#352f33_1480px,#4d7f88_1700px,#3a3238_1800px,#8a5048_2370px,#23607a_2500px,#3c8ca0_2560px)] p-[2px]">
        <div className="flex min-h-0 flex-1 flex-col overflow-hidden rounded-2xl">
          <TopBar />
          <Toolbar />
          <div className="flex min-h-0 flex-1">
            <Editor />
            <PreviewPanel />
            <PropertyPanel />
            <LayerPanel />
          </div>
        </div>
      </div>
      <Taskbar />
    </div>
  );
}
